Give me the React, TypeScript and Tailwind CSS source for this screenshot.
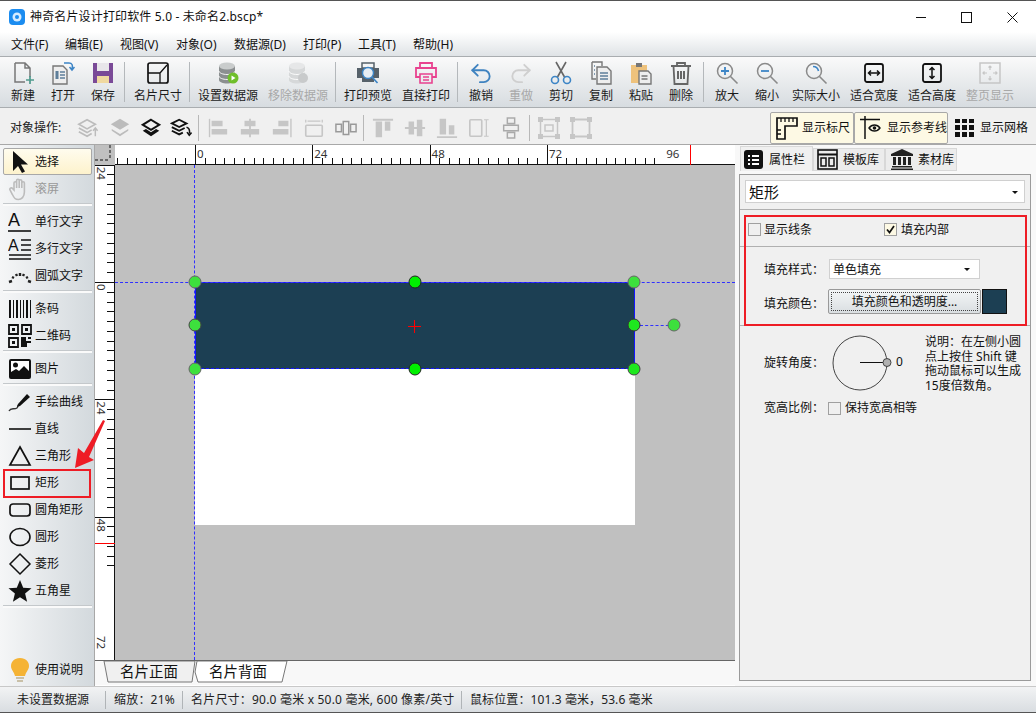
import type { ReactNode } from "react";
import { Redo2, Undo2 } from "lucide-react";

const DARK = "#1c3f53";

type ToolProps = { label: string; w: string; dim?: boolean; children: ReactNode };

function Tool({ label, w, dim, children }: ToolProps) {
  return (
    <div className={`flex shrink-0 flex-col items-center pt-[3px] ${w}`}>
      <div className="flex h-[26px] w-[26px] items-center justify-center">{children}</div>
      <span className={`mt-[2px] whitespace-nowrap text-[12px] leading-[16px] ${dim ? "text-[#a8a8a8]" : "text-[#1a1a1a]"}`}>{label}</span>
    </div>
  );
}

function Sep({ gap }: { gap?: boolean }) {
  return <div className={`mr-[1px] mt-[5px] h-[40px] w-[1px] shrink-0 bg-[#b4b8bb] ${gap ? "ml-[4px]" : "ml-[1px]"}`} />;
}

function Ic({ children, s = 24 }: { children: ReactNode; s?: number }) {
  return (
    <svg width={s} height={s} viewBox="0 0 24 24" fill="none">
      {children}
    </svg>
  );
}

function Db({ faded }: { faded?: boolean }) {
  const body = faded ? "#d6d8d9" : "#8b8f90";
  const top = faded ? "#e6e7e8" : "#c9cccc";
  return (
    <Ic>
      <path d="M3 5v14c0 2 4 3.5 8 3.5s8-1.500 8-3.500V5z" fill={body} />
      <ellipse cx="11" cy="5" rx="8" ry="3.500" fill={top} />
      <path d="M3 10c0 2 4 3.500 8 3.500s8-1.500 8-3.500M3 15c0 2 4 3.500 8 3.500s8-1.500 8-3.500" stroke="#fff" strokeWidth="0.900" />
      {faded ? (
        <circle cx="17" cy="17" r="5" fill="#c8cacb" />
      ) : (
        <>
          <circle cx="17" cy="17" r="5.500" fill="#6fbf2b" />
          <path d="M15.500 14.500v5l4-2.500z" fill="#fff" />
        </>
      )}
    </Ic>
  );
}

function Mag({ inner }: { inner?: ReactNode }) {
  return (
    <Ic>
      <circle cx="10" cy="10" r="7.500" stroke="#8a8a8a" strokeWidth="1.500" />
      <path d="M15.500 15.500l7 7" stroke="#8a8a8a" strokeWidth="1.600" />
      {inner}
    </Ic>
  );
}

function Fit({ v, dim }: { v?: boolean; dim?: boolean }) {
  if (dim) {
    return (
      <Ic>
        <rect x="2" y="2" width="20" height="20" stroke="#c6c6c6" strokeWidth="1.500" />
        <path d="M12 5v4M10.500 6.500L12 5l1.500 1.500M12 19v-4M10.500 17.500L12 19l1.500-1.500M5 12h4M6.500 10.500L5 12l1.500 1.500M19 12h-4M17.500 10.500L19 12l-1.500 1.500" stroke="#c6c6c6" strokeWidth="1.200" />
      </Ic>
    );
  }
  return (
    <Ic>
      <rect x="3" y="3" width="18" height="18" rx="2" stroke="#111" strokeWidth="1.800" />
      {v ? (
        <path d="M12 6.500v11M9.500 9L12 6.500 14.500 9M9.500 15l2.500 2.500 2.500-2.500" stroke="#111" strokeWidth="1.500" />
      ) : (
        <path d="M6.500 12h11M9 9.500L6.500 12 9 14.500M15 9.500l2.500 2.500-2.500 2.500" stroke="#111" strokeWidth="1.500" />
      )}
    </Ic>
  );
}

function MainToolbar() {
  return (
    <div className="flex h-[51px] shrink-0 border-b border-[#a9adb0] bg-gradient-to-b from-[#fafafa] to-[#d7dce0] pl-[3px]">
      <Tool label="新建" w="w-[40px]">
        <Ic>
          <path d="M4 2h10l5 5v9M14 2v5h5M4 2v19h10" stroke="#777" strokeWidth="1.500" />
          <path d="M19 15v8M15 19h8" stroke="#4f9a8d" strokeWidth="1.700" />
        </Ic>
      </Tool>
      <Tool label="打开" w="w-[40px]">
        <Ic>
          <path d="M2 5h10l4 4v14H2z" fill="#eee" stroke="#777" strokeWidth="1.400" />
          <path d="M4.500 10h3v8h-3z" fill="#5f7f9a" />
          <path d="M9 11h5M9 14h5M9 17h5" stroke="#5f7f9a" strokeWidth="1.300" />
          <path d="M13 2h5c3 0 4 2 3 6M18.500 6l2.500 3 2.500-3" stroke="#3d85c6" strokeWidth="1.500" />
        </Ic>
      </Tool>
      <Tool label="保存" w="w-[40px]">
        <Ic>
          <path d="M2 2h20v20H2z" fill="#7a4a97" />
          <path d="M6 2h12v8H6z" fill="#e8e6ea" />
          <path d="M6 15h12v7H6z" fill="#f0d9a0" />
        </Ic>
      </Tool>
      <Sep />
      <Tool label="名片尺寸" w="ml-[2px] w-[60px]">
        <Ic>
          <rect x="2" y="2" width="20" height="20" rx="2" stroke="#111" strokeWidth="1.700" />
          <path d="M2 12h12v10M14 12l7-8" stroke="#111" strokeWidth="1.300" />
        </Ic>
      </Tool>
      <Sep />
      <Tool label="设置数据源" w="w-[74px]">
        <Db />
      </Tool>
      <Tool label="移除数据源" w="w-[66px]" dim>
        <Db faded />
      </Tool>
      <Sep gap />
      <Tool label="打印预览" w="w-[62px]">
        <Ic>
          <path d="M6 2h12v5H6z" stroke="#56616a" strokeWidth="1.500" />
          <path d="M1 7h22v10H18v4H6v-4H1z" fill="#56616a" />
          <circle cx="12" cy="12" r="5.500" fill="#e8eef3" stroke="#3d85c6" strokeWidth="1.400" />
          <path d="M16 16l5.500 6" stroke="#3d85c6" strokeWidth="1.700" />
        </Ic>
      </Tool>
      <Tool label="直接打印" w="w-[54px]">
        <Ic>
          <path d="M6 7V2h12v5M6 16H2V7h20v9h-4" stroke="#e8428f" strokeWidth="1.800" />
          <path d="M6 13h12v9H6zM9 16h6M9 19h6" stroke="#e8428f" strokeWidth="1.600" />
        </Ic>
      </Tool>
      <Sep gap />
      <Tool label="撤销" w="w-[44px]">
        <Undo2 size={27} strokeWidth={1.700} color="#3f83c0" />
      </Tool>
      <Tool label="重做" w="w-[36px]" dim>
        <Redo2 size={27} strokeWidth={1.700} color="#cfcfcf" />
      </Tool>
      <Tool label="剪切" w="w-[44px]">
        <Ic>
          <path d="M7 1l8.500 15M17 1L8.500 16" stroke="#666" strokeWidth="1.600" />
          <circle cx="6" cy="19" r="3.500" stroke="#3d85c6" strokeWidth="1.600" />
          <circle cx="18" cy="19" r="3.500" stroke="#3d85c6" strokeWidth="1.600" />
        </Ic>
      </Tool>
      <Tool label="复制" w="w-[36px]">
        <Ic>
          <path d="M3 1h10v4M3 1v17h4" stroke="#777" strokeWidth="1.400" />
          <path d="M5 5h1M5 9h1M5 13h1" stroke="#5f7f9a" strokeWidth="1.400" />
          <path d="M8 6h10l4 4v13H8z" fill="#eee" stroke="#777" strokeWidth="1.400" />
          <path d="M11 12h8M11 15h8M11 18h8" stroke="#5f7f9a" strokeWidth="1.500" />
        </Ic>
      </Tool>
      <Tool label="粘贴" w="w-[44px]">
        <Ic>
          <path d="M2 4h16v18H2z" fill="#eec27c" />
          <path d="M7 2h6v4H7z" fill="#777" />
          <path d="M10 10h9l3 3v10H10z" fill="#eee" stroke="#777" strokeWidth="1.400" />
          <path d="M12.500 15h6M12.500 18h6" stroke="#777" strokeWidth="1.300" />
        </Ic>
      </Tool>
      <Tool label="删除" w="w-[36px]">
        <Ic>
          <path d="M2 5h20M8 5V2h8v3" stroke="#666" strokeWidth="1.800" />
          <path d="M4.500 5l1 18h13l1-18" stroke="#666" strokeWidth="1.800" />
          <path d="M9 10v8M12 10v8M15 10v8" stroke="#666" strokeWidth="2" />
        </Ic>
      </Tool>
      <Sep gap />
      <Tool label="放大" w="w-[44px]">
        <Mag inner={<path d="M6 10h8M10 6v8" stroke="#3d85c6" strokeWidth="1.800" />} />
      </Tool>
      <Tool label="缩小" w="w-[36px]">
        <Mag inner={<path d="M6 10h8" stroke="#3d85c6" strokeWidth="1.800" />} />
      </Tool>
      <Tool label="实际大小" w="w-[62px]">
        <Mag inner={<path d="M9 5.500c3 0 5 2 5.500 4.500" stroke="#3d85c6" strokeWidth="1.600" />} />
      </Tool>
      <Tool label="适合宽度" w="w-[54px]">
        <Fit />
      </Tool>
      <Tool label="适合高度" w="w-[62px]">
        <Fit v />
      </Tool>
      <Tool label="整页显示" w="w-[54px]" dim>
        <Fit dim />
      </Tool>
    </div>
  );
}

function Gi({ x, children, s = 22 }: { x: string; children: ReactNode; s?: number }) {
  return (
    <div className={`flex w-[32px] shrink-0 justify-center ${x}`}>
      <svg width={s} height={s} viewBox="0 0 24 24" fill="none">
        {children}
      </svg>
    </div>
  );
}

function VLine({ x }: { x: string }) {
  return <div className={`h-[26px] w-[1px] shrink-0 bg-[#b8b8b8] ${x}`} />;
}

function SecondToolbar() {
  const g = "#c6c6c6";
  return (
    <div className="flex h-[37px] shrink-0 items-center border-b border-[#a8a8a8] bg-[#f0f0f0] pl-[10px] pt-[3px]">
      <span className="w-[62px] shrink-0 text-[12px] leading-[16px] text-[#222]">对象操作:</span>
      <Gi x="">
        <path d="M2 8l9-5 9 5-9 5zM2 12l9 5 5-3M2 16l9 5 5-3" stroke="#bcbcbc" strokeWidth="1.800" />
        <path d="M20 21v-8M17.500 15l2.500-3 2.500 3" stroke="#bcbcbc" strokeWidth="1.600" />
      </Gi>
      <Gi x="">
        <path d="M12 2l10 6-10 6L2 8z" fill="#bcbcbc" />
        <path d="M3 13l9 5.500 9-5.500v2l-9 6-9-6z" fill="#bcbcbc" />
      </Gi>
      <Gi x="ml-[-1px]">
        <path d="M12 3l9 5.500-9 5.500-9-5.500z" stroke="#111" strokeWidth="2.200" />
        <path d="M3 15l9 6 9-6-3.500-2-5.500 3.500L6.500 13z" fill="#111" />
      </Gi>
      <Gi x="ml-[-2px]">
        <path d="M2 7l8-4 8 4-8 4zM2 11l8 4 6-3M2 15l8 4 4-2" stroke="#111" strokeWidth="2" />
        <path d="M18 11c3 1 4 3 3 7M18.500 16.500L21 20l2.500-3" stroke="#111" strokeWidth="1.600" />
      </Gi>
      <VLine x="ml-[1px]" />
      <Gi x="ml-[3px]">
        <path d="M2 2h1.500v20H2z" fill={g} />
        <path d="M5 4h12v6H5zM5 13h17v6H5z" fill={g} />
      </Gi>
      <Gi x="">
        <path d="M11 2h2v20h-2z" fill={g} />
        <path d="M6 4h12v6H6zM2 13h20v6H2z" fill={g} />
      </Gi>
      <Gi x="">
        <path d="M21 2h1.500v20H21z" fill={g} />
        <path d="M8 4h11v6H8zM2 13h17v6H2z" fill={g} />
      </Gi>
      <Gi x="">
        <path d="M3 3v3M21 3v3M5 4.500h14" stroke={g} strokeWidth="1.400" />
        <rect x="3" y="9" width="18" height="12" rx="1" stroke={g} strokeWidth="1.800" />
      </Gi>
      <Gi x="">
        <path d="M1 8h6v8H1zM9 5h6v14H9zM17 8h6v8h-6z" stroke="#999" strokeWidth="1.600" />
      </Gi>
      <VLine x="ml-[1px]" />
      <Gi x="ml-[3px]">
        <path d="M1 2h22v2H1zM4 5h7v17H4zM14 5h6v10h-6z" fill={g} />
      </Gi>
      <Gi x="">
        <path d="M1 11h22v2H1zM5 5h6v14H5zM14 3h6v18h-6z" fill={g} />
      </Gi>
      <Gi x="">
        <path d="M1 21h22v2H1zM4 2h7v17H4zM14 9h6v10h-6z" fill={g} />
      </Gi>
      <Gi x="">
        <rect x="2" y="3" width="13" height="18" rx="1" stroke={g} strokeWidth="1.800" />
        <path d="M20 3v18M17.500 3h5M17.500 21h5" stroke={g} strokeWidth="1.300" />
      </Gi>
      <Gi x="">
        <path d="M8 1h8v6H8zM4 9h16v6H4zM8 17h8v6H8z" stroke="#aaa" strokeWidth="1.600" />
      </Gi>
      <VLine x="ml-[2px]" />
      <Gi x="ml-[3px]" s={24}>
        <path d="M1 1h5v5H1zM18 1h5v5h-5zM1 18h5v5H1zM18 18h5v5h-5z" fill={g} />
        <path d="M6 3.500h12M6 20.500h12M3.500 6v12M20.500 6v12" stroke={g} strokeWidth="1.500" />
        <path d="M8 9h8v6H8z" stroke={g} strokeWidth="1.500" />
      </Gi>
      <Gi x="" s={24}>
        <path d="M1 1h5v5H1zM18 1h5v5h-5zM1 18h5v5H1zM18 18h5v5h-5z" fill={g} />
        <path d="M6 3.500h12M6 20.500h12M3.500 6v12M20.500 6v12" stroke={g} strokeWidth="1.800" />
      </Gi>
      <div className="ml-[173px] flex h-[32px] w-[84px] shrink-0 items-center rounded-[2px] border border-[#a8a8a8] bg-[#fdf9e4] pl-[5px]">
        <svg width="22" height="24" viewBox="0 0 22 24" fill="none">
          <path d="M1 2h20v8H9v13H1z" stroke="#111" strokeWidth="1.700" />
          <path d="M5 2v4M9 2v4M13 2v4M17 2v4M1 14h4M1 18h4" stroke="#111" strokeWidth="1.300" />
        </svg>
        <span className="ml-[4px] whitespace-nowrap text-[12px] leading-[16px] text-[#111]">显示标尺</span>
      </div>
      <div className="flex h-[32px] w-[94px] shrink-0 items-center rounded-[2px] border border-[#a8a8a8] bg-[#fdf9e4] pl-[5px]">
        <svg width="22" height="24" viewBox="0 0 22 24" fill="none">
          <path d="M0 3.500h20M5 0v23" stroke="#111" strokeWidth="1.500" />
          <path d="M9 12c3-4 8-4 11 0-3 4-8 4-11 0z" stroke="#111" strokeWidth="1.400" />
          <circle cx="14.500" cy="12" r="1.800" fill="#111" />
        </svg>
        <span className="ml-[5px] whitespace-nowrap text-[12px] leading-[16px] text-[#111]">显示参考线</span>
      </div>
      <div className="ml-[7px] grid h-[18px] w-[19px] shrink-0 grid-cols-3 gap-[2px]">
        {[0, 1, 2, 3, 4, 5, 6, 7, 8].map((i) => (
          <div key={i} className="bg-[#111]" />
        ))}
      </div>
      <span className="ml-[6px] whitespace-nowrap text-[12px] leading-[16px] text-[#111]">显示网格</span>
    </div>
  );
}

function SideItem({ label, dim, active, children }: { label: string; dim?: boolean; active?: boolean; children?: ReactNode }) {
  return (
    <div
      className={`flex h-[27px] shrink-0 items-center rounded-[2px] ${
        active ? "border border-[#a8a8a8] bg-gradient-to-b from-[#fffcee] to-[#fdf2cc]" : "border border-transparent"
      }`}
    >
      <div className="flex w-[31px] shrink-0 justify-center">{children}</div>
      <span className={`whitespace-nowrap text-[12px] leading-[16px] ${dim ? "text-[#999]" : "text-[#111]"}`}>{label}</span>
    </div>
  );
}

function SideSep() {
  return <div className="my-[2px] h-[2px] shrink-0 bg-[#fafafa] shadow-[0_-1px_0_#c4c8cb]" />;
}

function Sideicon({ children, w = 24, h = 24 }: { children: ReactNode; w?: number; h?: number }) {
  return (
    <svg width={w} height={h} viewBox="0 0 24 24" fill="none">
      {children}
    </svg>
  );
}

function Sidebar() {
  return (
    <div className="flex w-[95px] shrink-0 flex-col border-r border-[#a8a8a8] bg-gradient-to-r from-[#f5f6f7] to-[#d3d9dd] pb-[2px] pl-[3px] pr-[2px] pt-[3px]">
      <SideItem label="选择" active>
        <Sideicon>
          <path d="M5 1v20l5-5 4 7 3-1.500-4-7h7z" fill="#111" />
        </Sideicon>
      </SideItem>
      <SideItem label="滚屏" dim>
        <Sideicon>
          <path d="M6 13V6a1.300 1.300 0 0 1 2.600 0v5V3.500a1.300 1.300 0 0 1 2.600 0V11V4a1.300 1.300 0 0 1 2.600 0v7V6a1.300 1.300 0 0 1 2.600 0v9c0 5-3 7.500-6 7.500s-4-1-6-5L2 13c-1-2 2-3 3-1z" stroke="#bcbcbc" strokeWidth="1.600" />
        </Sideicon>
      </SideItem>
      <SideSep />
      <SideItem label="单行文字">
        <Sideicon>
          <text x="0" y="16" fontSize="18" fill="#111" fontFamily="Liberation Sans">A</text>
          <path d="M0 21h23" stroke="#111" strokeWidth="1.600" />
        </Sideicon>
      </SideItem>
      <SideItem label="多行文字">
        <Sideicon>
          <text x="0" y="14" fontSize="16" fill="#111" fontFamily="Liberation Sans">A</text>
          <path d="M13 3h10M13 8h10M13 13h10M1 18h22M1 22h22" stroke="#111" strokeWidth="1.500" />
        </Sideicon>
      </SideItem>
      <SideItem label="圆弧文字">
        <Sideicon>
          <path d="M1 18l3-1M4 13l2 1M8 10l1 2M12 9v3M16 10l-1 2M20 13l-2 1M23 18l-3-1" stroke="#222" strokeWidth="2.400" />
        </Sideicon>
      </SideItem>
      <SideSep />
      <SideItem label="条码">
        <Sideicon>
          <path d="M1 3h2v18H1zM5 3h1v18H5zM8 3h2v18H8zM12 3h1v18h-1zM15 3h1v18h-1zM18 3h2v18h-2zM22 3h1v18h-1z" fill="#111" />
        </Sideicon>
      </SideItem>
      <SideItem label="二维码">
        <Sideicon>
          <path d="M1 1h9v9H1zM14 1h9v9h-9zM1 14h9v9H1z" stroke="#111" strokeWidth="1.800" />
          <path d="M4 4h3v3H4zM17 4h3v3h-3zM4 17h3v3H4zM13 13h5v4h5v2h-4v4h-6zM20 13h3v2h-3z" fill="#111" />
        </Sideicon>
      </SideItem>
      <SideSep />
      <SideItem label="图片">
        <Sideicon>
          <rect x="1" y="2" width="22" height="20" rx="2" fill="#111" />
          <rect x="3" y="4" width="18" height="11" fill="#fff" />
          <circle cx="7.500" cy="8" r="2.500" fill="#111" />
          <path d="M3 15l5-3 3 2 5-5 5 5v3H3z" fill="#111" />
        </Sideicon>
      </SideItem>
      <SideSep />
      <SideItem label="手绘曲线">
        <Sideicon>
          <path d="M1 21c2-4 5-1 8-3 1.500-1 0-3 2-3" stroke="#333" strokeWidth="1.400" />
          <path d="M10 14l9-10 3 3-10 9-3 1z" fill="#111" />
        </Sideicon>
      </SideItem>
      <SideItem label="直线">
        <Sideicon>
          <path d="M1 12h22" stroke="#111" strokeWidth="1.600" />
        </Sideicon>
      </SideItem>
      <SideItem label="三角形">
        <Sideicon>
          <path d="M12 3L22 21H2z" stroke="#111" strokeWidth="1.700" />
        </Sideicon>
      </SideItem>
      <SideItem label="矩形">
        <Sideicon>
          <rect x="3" y="6" width="18" height="12" stroke="#111" strokeWidth="1.700" />
        </Sideicon>
      </SideItem>
      <SideItem label="圆角矩形">
        <Sideicon>
          <rect x="2" y="6" width="20" height="12" rx="3" stroke="#111" strokeWidth="1.700" />
        </Sideicon>
      </SideItem>
      <SideItem label="圆形">
        <Sideicon>
          <ellipse cx="12" cy="12" rx="10" ry="8.500" stroke="#111" strokeWidth="1.600" />
        </Sideicon>
      </SideItem>
      <SideItem label="菱形">
        <Sideicon>
          <path d="M12 2l10 10-10 10L2 12z" stroke="#111" strokeWidth="1.500" />
        </Sideicon>
      </SideItem>
      <SideItem label="五角星">
        <Sideicon>
          <path d="M12 1l3.200 7.700 8.300.6-6.400 5.300 2 8.100-7.100-4.400-7.100 4.400 2-8.100L.5 9.300l8.300-.6z" fill="#111" />
        </Sideicon>
      </SideItem>
      <SideSep />
      <div className="mt-auto mb-[1px]">
        <SideItem label="使用说明">
          <svg width="22" height="26" viewBox="0 0 22 26" fill="none">
            <path d="M11 1C5 1 2 5 2 9c0 4 3 5.500 4 10h10c1-4.500 4-6 4-10 0-4-3-8-9-8z" fill="#f5b335" />
            <path d="M7 20h8v2H7zM8 23h6v2H8z" fill="#c9c0a8" />
          </svg>
        </SideItem>
      </div>
    </div>
  );
}

const TOP_TICKS = Array.from({ length: 56 }, (_, i) => i - 8);
const LEFT_TICKS = Array.from({ length: 42 }, (_, i) => i - 12);
const STEP = 117.3 / 12;

function TopRuler() {
  return (
    <div className="flex h-[20px] shrink-0">
      <div className="h-[20px] w-[20px] shrink-0 bg-[#c0c0c0]">
        <svg width="20" height="20">
          <path d="M15 0v15M0 15h15" stroke="#111" strokeDasharray="3 2" />
        </svg>
      </div>
      <svg className="flex-1" height="20" width="620">
        <rect width="620" height="20" fill="#fff" />
        <path d="M0 19.500h620" stroke="#111" />
        {TOP_TICKS.map((k) => {
          const x = Math.round(80 + k * STEP) + 0.5;
          return <path key={k} d={k % 12 === 0 ? `M${x} 0v20` : `M${x} 13v7`} stroke="#111" />;
        })}
        {[0, 24, 48, 72, 96].map((n, i) => (
          <text key={n} x={80 + i * 117.3 + 2} y="13" fontSize="11.500" fill="#333" fontFamily="Noto Sans">
            {n}
          </text>
        ))}
        <path d="M575.500 0v20" stroke="#f00" />
      </svg>
    </div>
  );
}

function LeftRuler() {
  return (
    <svg width="20" height="495" className="shrink-0">
      <rect width="20" height="495" fill="#fff" />
      <path d="M19.500 0v495" stroke="#111" />
      {LEFT_TICKS.map((k) => {
        const y = Math.round(117 + k * STEP) + 0.5;
        return <path key={k} d={k % 12 === 0 ? `M0 ${y}h20` : `M12 ${y}h8`} stroke="#111" />;
      })}
      {[-24, 0, 24, 48, 72].map((n) => {
        const y = 117 + (n / 24) * 117.3 + 2;
        return (
          <text key={n} x="0" y="0" fontSize="11.500" fill="#333" fontFamily="Noto Sans" transform={`translate(2 ${y}) rotate(90)`}>
            {Math.abs(n)}
          </text>
        );
      })}
      <path d="M0 378.500h20" stroke="#f00" />
    </svg>
  );
}

const HANDLES = [
  { x: 80, y: 117, c: "bg-[#3de03d] border-[#666]" },
  { x: 300, y: 117, c: "bg-[#00f000] border-[#222]" },
  { x: 519, y: 117, c: "bg-[#3de03d] border-[#666]" },
  { x: 80, y: 160, c: "bg-[#3de03d] border-[#444]" },
  { x: 519, y: 160, c: "bg-[#1ee81e] border-[#333]" },
  { x: 80, y: 204, c: "bg-[#3de03d] border-[#666]" },
  { x: 300, y: 204, c: "bg-[#00f000] border-[#222]" },
  { x: 519, y: 204, c: "bg-[#1ee81e] border-[#444]" },
  { x: 559, y: 160, c: "bg-[#3de03d] border-[#666]" },
];

function Canvas() {
  return (
    <div className="relative h-[495px] flex-1 overflow-hidden bg-[#c0c0c0]">
      <div className="absolute left-[80px] top-[117px] h-[243px] w-[440px] bg-white" />
      <div className="absolute left-[80px] top-[117px] h-[87px] w-[440px] border-x border-t border-[#1414ff] bg-[#1c3f53]">
        <div className="absolute bottom-0 left-0 right-0 border-b border-dashed border-[#1414ff]" />
      </div>
      <div className="absolute bottom-0 left-[79px] top-0 border-l border-dashed border-[#3030ff]" />
      <div className="absolute left-0 right-0 top-[117px] border-t border-dashed border-[#3030ff]" />
      <div className="absolute left-[525px] top-[160px] w-[34px] border-t border-dashed border-[#3030ff]" />
      <svg className="absolute left-[293px] top-[155px]" width="13" height="13">
        <path d="M6.500 0v13M0 6.500h13" stroke="#f00" />
      </svg>
      {HANDLES.map((h) => (
        <div
          key={`${h.x}-${h.y}`}
          className={`absolute h-[13px] w-[13px] -translate-x-1/2 -translate-y-1/2 rounded-full border ${h.c}`}
          style={{ left: h.x, top: h.y }}
        />
      ))}
    </div>
  );
}

function PageTabs() {
  return (
    <div className="relative flex h-[25px] shrink-0 items-start border-t border-[#666] bg-[#f8f8f8] pl-[25px]">
      <svg className="absolute left-[8px] top-0" width="190" height="24" fill="none">
        <path d="M92 0l-3 21H5L1 0z" fill="#f0f0f0" stroke="#777" />
        <path d="M184 0l-5 21H95l-3-10 2-11z" fill="#fff" stroke="#777" />
      </svg>
      <span className="relative text-[14.500px] leading-[20px] text-[#111]">名片正面</span>
      <span className="relative ml-[31px] text-[14.500px] leading-[20px] text-[#111]">名片背面</span>
    </div>
  );
}

function Check({ on, className = "" }: { on?: boolean; className?: string }) {
  return (
    <div className={`flex h-[13px] w-[13px] shrink-0 items-center justify-center border border-[#a0a0a0] ${on ? "bg-[#fdf9e4]" : "bg-[#f0f0f0]"} ${className}`}>
      {on ? (
        <svg width="9" height="9" viewBox="0 0 9 9" fill="none">
          <path d="M1 4.500l2.500 3L8 1" stroke="#111" strokeWidth="1.700" />
        </svg>
      ) : null}
    </div>
  );
}

function Caret() {
  return <div className="h-0 w-0 border-x-[3px] border-t-[3px] border-x-transparent border-t-[#111]" />;
}

function Tab({ label, active, gap, children }: { label: string; active?: boolean; gap: string; children: ReactNode }) {
  return (
    <div
      className={`flex shrink-0 items-center border border-[#d8d8d8] pl-[3px] ${
        active ? "z-10 mb-[-1px] mt-[1px] h-[25px] w-[73px] border-b-0 bg-[#f0f0f0] pt-[1px]" : "mt-[3px] h-[23px] w-[72px] bg-[#ececec]"
      }`}
    >
      {children}
      <span className={`whitespace-nowrap text-[12px] leading-[16px] text-[#111] ${gap}`}>{label}</span>
    </div>
  );
}

function PropsPanel() {
  return (
    <div className="flex w-[301px] shrink-0 flex-col bg-[#f8f8f8] pl-[4px] pr-[5px]">
      <div className="flex h-[29px] shrink-0 pl-[1px]">
        <Tab label="属性栏" active gap="ml-[6px]">
          <svg width="19" height="19" viewBox="0 0 19 19">
            <rect width="19" height="19" rx="3" fill="#111" />
            <path d="M4 5h2v2H4zM8 5h7v2H8zM4 9h2v2H4zM8 9h7v2H8zM4 13h2v2H4zM8 13h7v2H8z" fill="#fff" />
          </svg>
        </Tab>
        <Tab label="模板库" gap="ml-[5px]">
          <svg width="21" height="21" viewBox="0 0 21 21" fill="none">
            <rect x="1" y="1" width="19" height="19" stroke="#111" strokeWidth="1.600" />
            <path d="M1 5.500h19" stroke="#111" strokeWidth="2" />
            <path d="M4 9h5v8H4zM12 9h5v8h-5z" stroke="#111" strokeWidth="1.500" />
          </svg>
        </Tab>
        <Tab label="素材库" gap="ml-[5px]">
          <svg className="ml-[2px]" width="22" height="21" viewBox="0 0 22 21">
            <path d="M11 0l11 5v2H0V5zM2 8h3v8H2zM7 8h3v8H7zM12 8h3v8h-3zM17 8h3v8h-3zM1 17h20v1.500H1zM0 19.500h22V21H0z" fill="#222" />
          </svg>
        </Tab>
      </div>
      <div className="flex h-[507px] flex-col border border-[#9a9a9a] bg-[#f0f0f0]">
        <div className="h-[35px] shrink-0 border-b border-[#b0b0b0] pl-[5px] pr-[5px] pt-[5px]">
          <div className="flex h-[23px] items-center justify-between border border-[#d0d0d0] bg-white pl-[3px] pr-[6px] pt-[1px]">
            <span className="text-[15px] leading-[20px] text-[#111]">矩形</span>
            <Caret />
          </div>
        </div>
        <div className="flex h-[37px] shrink-0 items-center border-b border-[#b0b0b0] pl-[8px] pt-[4px]">
          <Check className="-translate-y-px" />
          <span className="ml-[3px] w-[120px] text-[12px] leading-[16px] text-[#111]">显示线条</span>
          <Check on className="-translate-y-px" />
          <span className="ml-[4px] text-[12px] leading-[16px] text-[#111]">填充内部</span>
        </div>
        <div className="h-[79px] shrink-0 border-b border-[#b0b0b0] pl-[24px] pt-[12px]">
          <div className="flex h-[20px] items-center">
            <span className="w-[65px] shrink-0 translate-y-px text-[12px] leading-[16px] text-[#111]">填充样式：</span>
            <div className="flex h-[20px] w-[151px] items-center justify-between border border-[#d0d0d0] bg-white pl-[3px] pr-[9px]">
              <span className="translate-y-px text-[12px] leading-[16px] text-[#111]">单色填充</span>
              <Caret />
            </div>
          </div>
          <div className="mt-[10px] flex h-[25px] items-center">
            <span className="w-[64px] shrink-0 translate-y-[2px] text-[12px] leading-[16px] text-[#111]">填充颜色：</span>
            <div className="flex h-[25px] w-[153px] shrink-0 items-center justify-center rounded-[2px] border border-[#999] bg-gradient-to-b from-[#f4f6f7] to-[#d9dee1] p-[2px]">
              <div className="flex h-full w-full items-center justify-center border border-dotted border-[#444]">
                <span className="text-[12px] leading-[16px] text-[#111]">填充颜色和透明度...</span>
              </div>
            </div>
            <div className="ml-[1px] h-[25px] w-[25px] shrink-0 border border-[#111]" style={{ backgroundColor: DARK }} />
          </div>
        </div>
        <div className="flex pl-[24px] pt-[8px]">
          <span className="mt-[21px] w-[65px] shrink-0 text-[12px] leading-[16px] text-[#111]">旋转角度：</span>
          <svg className="shrink-0" width="64" height="58" viewBox="0 0 64 58" fill="none">
            <circle cx="31" cy="29" r="27" stroke="#444" />
            <path d="M31 28.500h26" stroke="#111" />
            <circle cx="58" cy="28.500" r="4" fill="#b0b0b0" stroke="#444" />
          </svg>
          <span className="ml-[3px] mt-[20px] w-[29px] shrink-0 text-[12px] leading-[16px] text-[#111]">0</span>
          <div className="w-[100px] shrink-0 whitespace-nowrap pt-[1px] text-[12px] leading-[14.500px] text-[#111]">
            <div>说明：在左侧小圆</div>
            <div>点上按住 Shift 键</div>
            <div>拖动鼠标可以生成</div>
            <div>15度倍数角。</div>
          </div>
        </div>
        <div className="mt-[7px] flex items-center pl-[24px]">
          <span className="w-[64px] shrink-0 text-[12px] leading-[16px] text-[#111]">宽高比例：</span>
          <Check />
          <span className="ml-[4px] text-[12px] leading-[16px] text-[#111]">保持宽高相等</span>
        </div>
      </div>
    </div>
  );
}

function StatusBar() {
  const bar = "h-[18px] w-[1px] shrink-0 bg-[#b0b4b7]";
  return (
    <div className="flex h-[26px] shrink-0 items-center border-t border-[#c8c8c8] bg-gradient-to-b from-[#f2f3f4] to-[#d9dde1] pl-[17px] text-[12px] leading-[16px] text-[#222]">
      <span className="w-[88px] shrink-0">未设置数据源</span>
      <div className={bar} />
      <span className="w-[76px] shrink-0 pl-[8px] tracking-[0.2px]">缩放：21%</span>
      <div className={bar} />
      <span className="w-[278px] shrink-0 whitespace-nowrap pl-[8px] tracking-[0.2px]">名片尺寸：90.0 毫米 x 50.0 毫米, 600 像素/英寸</span>
      <div className={bar} />
      <span className="whitespace-nowrap pl-[8px] tracking-[0.1px]">鼠标位置：101.3 毫米，53.6 毫米</span>
    </div>
  );
}

export default function App() {
  return (
    <div className="relative flex h-[713px] w-[1036px] flex-col overflow-hidden border-y border-[#555] bg-white font-['Noto_Sans','Noto_Sans_CJK_SC',sans-serif]">
      <div className="flex h-[31px] shrink-0 items-center bg-white pl-[9px] pt-[1px]">
        <svg width="16" height="16" viewBox="0 0 16 16">
          <rect width="16" height="16" rx="4" fill="#1b8cf0" />
          <circle cx="8" cy="8" r="4.500" fill="#d6ecff" />
          <circle cx="8" cy="8" r="2" fill="#1b8cf0" />
        </svg>
        <span className="ml-[5px] whitespace-nowrap text-[12px] leading-[16px] tracking-[0.15px] text-[#111]">神奇名片设计打印软件 5.0 - 未命名2.bscp*</span>
        <div className="ml-auto flex items-center">
          <div className="h-[1px] w-[10px] bg-[#111]" />
          <div className="ml-[35px] h-[11px] w-[11px] border border-[#111]" />
          <svg className="ml-[35px] mr-[18px]" width="11" height="11">
            <path d="M0.500 0.500l10 10M10.500 0.500l-10 10" stroke="#111" />
          </svg>
        </div>
      </div>
      <div className="flex h-[25px] shrink-0 items-center border-b border-[#a9adb0] bg-gradient-to-b from-white to-[#dfe3e6] pl-[11px] pt-[2px] text-[12px] leading-[16px] text-[#111]">
        <span className="w-[54px] shrink-0">文件(F)</span>
        <span className="w-[55px] shrink-0">编辑(E)</span>
        <span className="w-[56px] shrink-0">视图(V)</span>
        <span className="w-[58px] shrink-0">对象(O)</span>
        <span className="w-[69px] shrink-0">数据源(D)</span>
        <span className="w-[55px] shrink-0">打印(P)</span>
        <span className="w-[55px] shrink-0">工具(T)</span>
        <span>帮助(H)</span>
      </div>
      <MainToolbar />
      <SecondToolbar />
      <div className="flex min-h-0 flex-1">
        <Sidebar />
        <div className="flex w-[640px] shrink-0 flex-col">
          <TopRuler />
          <div className="flex">
            <LeftRuler />
            <Canvas />
          </div>
          <PageTabs />
        </div>
        <PropsPanel />
      </div>
      <StatusBar />

      {/* 标注：红框和箭头 */}
      <div className="absolute left-[3px] top-[468px] h-[29px] w-[88px] border-2 border-[#ee1c25]" />
      <div className="absolute left-[744px] top-[214px] h-[111px] w-[283px] border-2 border-[#ee1c25]" />
      <svg className="absolute left-[70px] top-[415px]" width="40" height="55">
        <path d="M5 52L8 32l6 5L33 4l2 1-16 36 5 3z" fill="#ee1c25" />
      </svg>
    </div>
  );
}
